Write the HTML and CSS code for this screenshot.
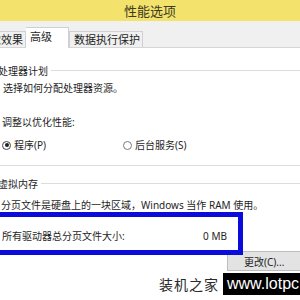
FILE: index.html
```html
<!DOCTYPE html>
<html lang="zh-CN">
<head>
  <meta charset="UTF-8">
  <title>性能选项</title>
  <link rel="stylesheet" href="styles.css">
</head>
<body>
  <div class="dialog">
    <!-- Title bar -->
    <div class="titlebar">性能选项</div>

    <!-- Tabs -->
    <div class="tabstrip">
      <div class="tab tab-first">视觉效果</div>
      <div class="tab tab-active">高级</div>
      <div class="tab">数据执行保护</div>
    </div>

    <div class="panel">
      <!-- Processor scheduling -->
      <div class="legend"><span>处理器计划</span><span class="legend-line"></span></div>
      <p class="text text-desc">选择如何分配处理器资源。</p>
      <p class="text text-adjust">调整以优化性能:</p>
      <div class="radio-row">
        <label class="radio"><span class="radio-dot checked"></span>程序(P)</label>
        <label class="radio radio-second"><span class="radio-dot"></span>后台服务(S)</label>
      </div>
      <div class="divider"></div>

      <!-- Virtual memory -->
      <div class="legend legend-vm"><span>虚拟内存</span><span class="legend-line"></span></div>
      <p class="text text-paging">分页文件是硬盘上的一块区域，Windows 当作 RAM 使用。</p>
      <div class="total-row">
        <span>所有驱动器总分页文件大小:</span>
        <span>0 MB</span>
        <div class="highlight"></div>
      </div>
      <div class="button-row">
        <button class="btn">更改(C)...</button>
      </div>
    </div>

    <!-- Watermark -->
    <div class="watermark">
      <span class="wm-name">装机之家</span>
      <span class="wm-url">www.lotpc.com</span>
    </div>
  </div>
</body>
</html>
```

FILE: styles.css
```css
/* Cropped Windows performance options dialog */
body {
  margin: 0;
  width: 300px;
  height: 300px;
  overflow: hidden;
  background: #fff;
  font-family: "Noto Sans", "Noto Sans CJK SC", sans-serif;
  color: #1e1e1e;
}
.dialog {
  position: relative;
  width: 300px;
  height: 300px;
  overflow: hidden;
}
.titlebar {
  height: 21px;
  line-height: 22px;
  background: #f3e36c;
  text-align: center;
  font-size: 13px;
  color: #3d3b22;
}
.tabstrip {
  display: flex;
  align-items: flex-end;
  height: 26px;
  background: #f0f0f0;
  border-bottom: 1px solid #d6d6d6;
  font-size: 11px;
}
.tab {
  height: 15px;
  line-height: 15px;
  padding: 0 2px 0 4px;
  border: 1px solid #d0d0d0;
  border-bottom: none;
  background: #f0f0f0;
}
.tab-first {
  margin-left: -22px;
  padding: 0 2px 0 0;
}
.tab-active {
  height: 20px;
  line-height: 18px;
  margin-bottom: -1px;
  padding: 0 16px 0 4px;
  background: #fff;
  border-left: none;
}
.panel {
  padding-top: 15px;
  font-size: 10px;
}
.legend {
  display: flex;
  align-items: center;
  height: 14px;
  margin-left: -2px;
}
.legend-line {
  flex: 1;
  margin-left: 3px;
  border-top: 1px solid #dcdcdc;
}
.text {
  margin: 0;
  height: 14px;
  line-height: 14px;
  white-space: nowrap;
}
.text-desc {
  margin: 4px 0 0 3px;
}
.text-adjust {
  margin: 20px 0 0 2px;
}
.radio-row {
  display: flex;
  height: 14px;
  line-height: 14px;
  margin: 9px 0 0 2px;
}
.radio {
  display: flex;
  align-items: center;
  gap: 3px;
}
.radio-second {
  margin-left: 77px;
}
.radio-dot {
  position: relative;
  box-sizing: border-box;
  width: 9px;
  height: 9px;
  border: 1px solid #7a7a7a;
  border-radius: 50%;
  background: #fff;
}
.radio-dot.checked {
  border-color: #444;
}
.radio-dot.checked::after {
  content: "";
  position: absolute;
  left: 1.5px;
  top: 1.5px;
  width: 4px;
  height: 4px;
  border-radius: 50%;
  background: #222;
}
.divider {
  margin-top: 13px;
  border-top: 1px solid #dcdcdc;
}
.legend-vm {
  margin-top: 10px;
}
.text-paging {
  margin: 8px 0 0 1px;
}
.total-row {
  position: relative;
  display: flex;
  justify-content: space-between;
  height: 14px;
  line-height: 14px;
  margin-top: 17px;
  padding: 0 73px 0 2px;
}
.highlight {
  position: absolute;
  left: -10px;
  right: 57px;
  top: -17px;
  height: 43px;
  box-sizing: border-box;
  border: 5px solid #0b0bdc;
  z-index: 2;
}
.button-row {
  margin-top: 8px;
}
.btn {
  display: block;
  width: 90px;
  height: 20px;
  margin-left: 227px;
  padding: 0 0 0 16px;
  text-align: left;
  font-family: inherit;
  font-size: 10px;
  color: #1e1e1e;
  background: #e3e3e3;
  border: 1px solid #bdbdbd;
}
.watermark {
  position: absolute;
  left: 159px;
  top: 273px;
  width: 200px;
  display: flex;
  align-items: center;
  gap: 4px;
  white-space: nowrap;
}
.wm-name {
  flex-shrink: 0;
  font-size: 14px;
  letter-spacing: 1px;
  color: #2a2a2a;
}
.wm-url {
  flex-shrink: 0;
  height: 22px;
  line-height: 22px;
  padding: 0 10px 0 4px;
  background: #000;
  color: #fff;
  font-family: "Liberation Sans", sans-serif;
  font-size: 16px;
}
```
